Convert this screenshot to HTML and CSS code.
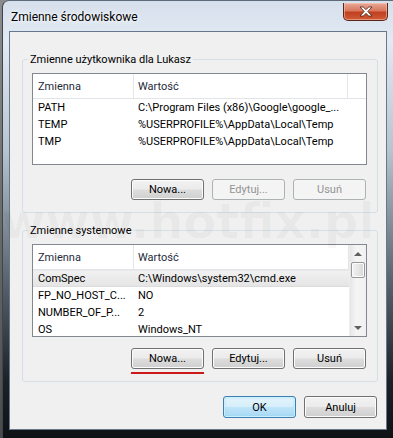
FILE: index.html
```html
<!DOCTYPE html>
<html lang="pl">
<head>
    <meta charset="UTF-8">
    <meta name="viewport" content="width=device-width, initial-scale=1.0">
    <title>Zmienne środowiskowe</title>
    <link rel="stylesheet" href="styles.css">
</head>
<body>
    <div class="window">
        <div class="titlebar">
            <span class="title">Zmienne środowiskowe</span>
            <button class="close-button">
                <svg viewBox="0 0 14 11">
                    <path d="M1 1h3.2L7 3.6 9.8 1H13L8.8 5.5 13 10H9.8L7 7.4 4.2 10H1l4.2-4.5z"/>
                </svg>
            </button>
        </div>

        <div class="client">
            <fieldset class="group">
                <legend>Zmienne użytkownika dla Lukasz</legend>
                <div class="list list-user">
                    <div class="list-body">
                        <div class="list-head">
                            <span class="cell name">Zmienna</span>
                            <span class="cell value">Wartość</span>
                        </div>
                        <div class="row"><span class="cell name">PATH</span><span class="cell value">C:\Program Files (x86)\Google\google_...</span></div>
                        <div class="row"><span class="cell name">TEMP</span><span class="cell value">%USERPROFILE%\AppData\Local\Temp</span></div>
                        <div class="row"><span class="cell name">TMP</span><span class="cell value">%USERPROFILE%\AppData\Local\Temp</span></div>
                    </div>
                </div>
                <div class="buttons">
                    <button class="btn">Nowa...</button>
                    <button class="btn" disabled>Edytuj...</button>
                    <button class="btn" disabled>Usuń</button>
                </div>
            </fieldset>

            <fieldset class="group group-system">
                <legend>Zmienne systemowe</legend>
                <div class="list list-system">
                    <div class="list-body">
                        <div class="list-head">
                            <span class="cell name">Zmienna</span>
                            <span class="cell value">Wartość</span>
                        </div>
                        <div class="row selected"><span class="cell name">ComSpec</span><span class="cell value">C:\Windows\system32\cmd.exe</span></div>
                        <div class="row"><span class="cell name">FP_NO_HOST_C...</span><span class="cell value">NO</span></div>
                        <div class="row"><span class="cell name">NUMBER_OF_P...</span><span class="cell value">2</span></div>
                        <div class="row"><span class="cell name">OS</span><span class="cell value">Windows_NT</span></div>
                    </div>
                    <div class="scrollbar">
                        <div class="arrow up"></div>
                        <div class="track"><div class="thumb"></div></div>
                        <div class="arrow down"></div>
                    </div>
                </div>
                <div class="buttons">
                    <button class="btn marked">Nowa...</button>
                    <button class="btn">Edytuj...</button>
                    <button class="btn">Usuń</button>
                </div>
            </fieldset>

            <div class="dialog-buttons">
                <button class="btn default">OK</button>
                <button class="btn">Anuluj</button>
            </div>
        </div>

        <div class="watermark">www.hotfix.pl</div>
    </div>
</body>
</html>
```

FILE: styles.css
```css
:root {
    --face-color: #f0f0f0;
    --text-color: #000000;
    --disabled-text: #939393;
    --list-border: #828790;
    --group-border: #d5dfe5;
    --ui-font: "Segoe UI", Roboto, "Liberation Sans", sans-serif;
}

* {
    margin: 0;
    padding: 0;
    box-sizing: border-box;
}

body {
    width: 393px;
    height: 438px;
    overflow: hidden;
    background: linear-gradient(to bottom, #8c8c8c, #4a4a4a);
    font-family: var(--ui-font);
    font-size: 11px;
    color: var(--text-color);
}

.window {
    position: relative;
    width: 391px;
    height: 438px;
    margin-left: 2px;
    padding: 0 6px 8px 6px;
    border-left: 1px solid #3b4652;
    border-top: 1px solid #5d6b7a;
    border-radius: 7px 0 0 0;
    background: linear-gradient(to bottom, #d6e0ec 0, #e2eaf3 40px, #b7c3cf 150px, #59636d 280px, #1c2126 380px, #0f1215 438px);
    display: flex;
    flex-direction: column;
}

.titlebar {
    height: 30px;
    display: flex;
    justify-content: space-between;
    align-items: flex-start;
}

.title {
    padding: 9px 0 0 2px;
    font-size: 12px;
    line-height: 15px;
    text-shadow: 0 0 6px #ffffff, 0 0 3px #ffffff;
}

.close-button {
    width: 45px;
    height: 18px;
    margin: 2px -1px 0 0;
    border: 1px solid #5a2519;
    border-top: none;
    border-radius: 0 0 5px 5px;
    background: linear-gradient(to bottom, #e9a99a 0%, #d8785f 45%, #c1401f 55%, #cf5b38 100%);
    box-shadow: inset 0 0 0 1px rgba(255, 210, 190, 0.5);
    display: flex;
    align-items: center;
    justify-content: center;
}

.close-button svg {
    width: 14px;
    height: 11px;
    fill: #ffffff;
    stroke: #4a1e14;
    stroke-width: 0.8;
}

.client {
    flex: 1;
    background-color: var(--face-color);
    border: 1px solid #66788d;
    padding: 20px 8px 11px 12px;
    display: flex;
    flex-direction: column;
}

.group {
    border: 1px solid var(--group-border);
    border-radius: 3px;
    padding: 6px 10px 12px 9px;
    min-width: 0;
}

.group-system {
    margin-top: 10px;
}

.group legend {
    margin-left: -4px;
    padding: 0 2px;
    line-height: 15px;
}

.list {
    display: flex;
    height: 92px;
    border: 1px solid var(--list-border);
    background-color: #ffffff;
    overflow: hidden;
}

.list-system {
    height: 93px;
}

.list-body {
    flex: 1;
    min-width: 0;
}

.list-head {
    height: 25px;
    display: grid;
    grid-template-columns: 101px 1fr;
    border-bottom: 1px solid #e1e4e8;
}

.list-user .list-head {
    grid-template-columns: 101px 214px 1fr;
}

.list-user .list-head::after {
    content: "";
}

.list-head .cell {
    display: flex;
    align-items: center;
    color: #1e2a3a;
    border-right: 1px solid #e5e5e5;
}

.row {
    height: 17px;
    display: grid;
    grid-template-columns: 101px 1fr;
    align-items: center;
}

.cell {
    white-space: nowrap;
    overflow: hidden;
    line-height: 15px;
}

.cell.name {
    padding-left: 5px;
}

.cell.value {
    padding-left: 4px;
}

.row.selected {
    background: linear-gradient(to bottom, #f1f1f1, #e5e5e5);
    border-top: 1px solid #e8e8e8;
    border-bottom: 1px solid #dcdcdc;
}

.scrollbar {
    width: 17px;
    display: flex;
    flex-direction: column;
    background: linear-gradient(to right, #e6e6e6, #f5f5f5 40%, #f0f0f0);
    border-left: 1px solid #ededed;
}

.arrow {
    height: 17px;
    display: flex;
    align-items: center;
    justify-content: center;
}

.arrow::before {
    content: "";
    border-left: 4px solid transparent;
    border-right: 4px solid transparent;
}

.arrow.up::before {
    border-bottom: 4px solid #606060;
}

.arrow.down::before {
    border-top: 4px solid #606060;
}

.track {
    flex: 1;
    padding: 0 1px;
}

.thumb {
    height: 16px;
    border: 1px solid #979797;
    border-radius: 2px;
    background: linear-gradient(to right, #f3f3f3, #e6e6e6 50%, #d6d6d6);
    box-shadow: inset 0 0 0 1px #fbfbfb;
}

.buttons {
    display: flex;
    justify-content: flex-end;
    gap: 8px;
    margin: 14px 1px 0 0;
}

.group-system .buttons {
    margin-top: 11px;
}

.btn {
    position: relative;
    width: 73px;
    height: 21px;
    border: 1px solid #707070;
    border-radius: 3px;
    background: linear-gradient(to bottom, #f2f2f2 0%, #ebebeb 48%, #dddddd 52%, #cfcfcf 100%);
    box-shadow: inset 0 0 0 1px #fcfcfc;
    font-family: var(--ui-font);
    font-size: 11px;
    color: var(--text-color);
}

.btn:disabled {
    border-color: #adb2b5;
    background: #f4f4f4;
    box-shadow: none;
    color: var(--disabled-text);
}

.btn.default {
    border-color: #3c7fb1;
    background: linear-gradient(to bottom, #e5f4fc 0%, #d5eefb 48%, #bde4f9 52%, #a8d8f3 100%);
    box-shadow: inset 0 0 0 1px #cdeefc, inset 0 0 3px #7fd3f5;
}

.btn.marked::after {
    content: "";
    position: absolute;
    left: -1px;
    right: -1px;
    bottom: -6px;
    height: 2px;
    background-color: #cc1a1a;
}

.dialog-buttons {
    display: flex;
    justify-content: flex-end;
    gap: 8px;
    margin: 14px 1px 0 0;
}

.dialog-buttons .btn {
    width: 73px;
    height: 22px;
}

/* faint watermark lying over the dialog */
.watermark {
    position: absolute;
    top: 202px;
    left: -2px;
    font-family: "DejaVu Sans", sans-serif;
    font-weight: bold;
    font-size: 48px;
    line-height: 36px;
    white-space: nowrap;
    color: rgba(0, 0, 0, 0.03);
    pointer-events: none;
}
```
